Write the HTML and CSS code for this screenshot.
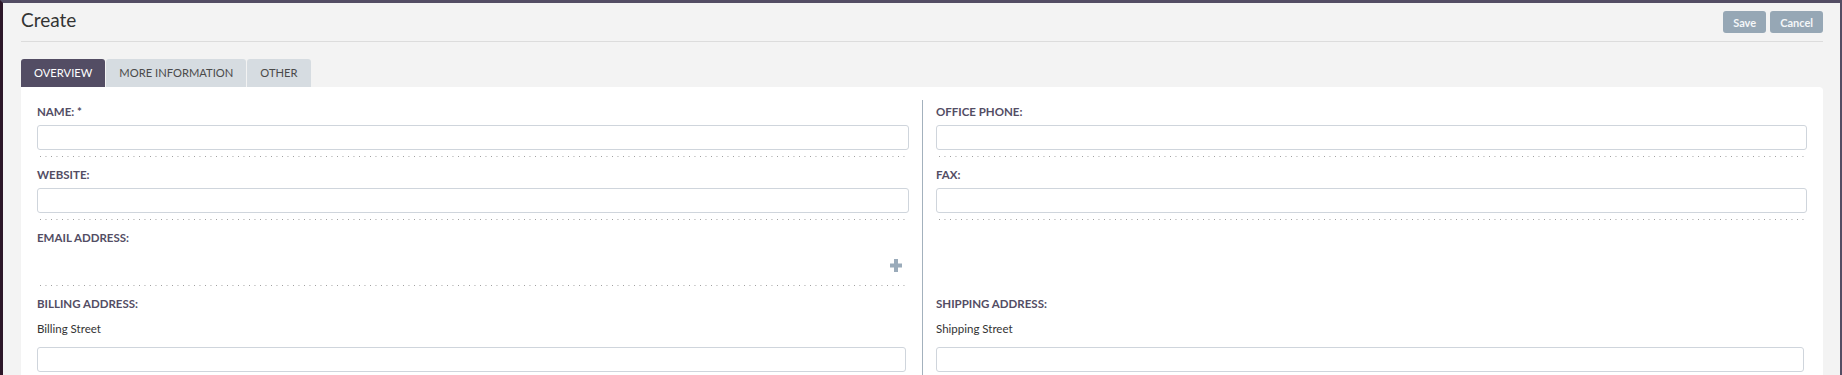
FILE: index.html
```html
<!DOCTYPE html>
<html lang="en">

<head>
    <meta charset="UTF-8">
    <meta name="viewport" content="width=device-width, initial-scale=1.0">
    <title>Create</title>
    <link rel="stylesheet" href="styles.css">
</head>

<body>
    <div class="page">
        <!-- Header -->
        <div class="header">
            <h1 class="title">Create</h1>
            <div class="actions">
                <button class="btn">Save</button>
                <button class="btn">Cancel</button>
            </div>
        </div>

        <!-- Tabs -->
        <div class="tabs">
            <div class="tab active">Overview</div>
            <div class="tab">More Information</div>
            <div class="tab">Other</div>
        </div>

        <div class="panel">
            <div class="fields">
                <div class="cell">
                    <div class="field first">
                        <label class="label">Name: *</label>
                        <input class="input" type="text">
                    </div>
                </div>
                <div class="cell right">
                    <div class="field first">
                        <label class="label">Office Phone:</label>
                        <input class="input" type="text">
                    </div>
                </div>

                <div class="cell">
                    <div class="field">
                        <label class="label">Website:</label>
                        <input class="input" type="text">
                    </div>
                </div>
                <div class="cell right">
                    <div class="field">
                        <label class="label">Fax:</label>
                        <input class="input" type="text">
                    </div>
                </div>

                <div class="cell">
                    <div class="field">
                        <label class="label">Email Address:</label>
                        <div class="add-line">
                            <svg class="plus" width="12" height="13" viewBox="0 0 12 13">
                                <rect x="4" y="0" width="4" height="13" fill="#9aabba" />
                                <rect x="0" y="4.5" width="12" height="4" fill="#9aabba" />
                            </svg>
                        </div>
                    </div>
                </div>
                <div class="cell right"></div>

                <div class="cell">
                    <div class="field address">
                        <label class="label">Billing Address:</label>
                        <div class="sublabel">Billing Street</div>
                        <input class="input" type="text">
                    </div>
                </div>
                <div class="cell right">
                    <div class="field address">
                        <label class="label">Shipping Address:</label>
                        <div class="sublabel">Shipping Street</div>
                        <input class="input" type="text">
                    </div>
                </div>
            </div>
        </div>
    </div>
</body>

</html>
```

FILE: styles.css
```css
html,
body {
    height: 100%;
}

body {
    margin: 0;
    box-sizing: border-box;
    font-family: Lato, "Open Sans", sans-serif;
    background-color: #f3f3f3;
    border-top: 3px solid #534d64;
    border-left: 3px solid #2c1729;
    border-right: 2px solid #534d64;
    overflow: hidden;
}

.page {
    display: flex;
    flex-direction: column;
    height: 100%;
    padding: 0 17px 0 18px;
}

.header {
    display: flex;
    justify-content: space-between;
    align-items: flex-start;
    padding: 8px 0;
    border-bottom: 1px solid #dcdcdc;
}

.title {
    margin: 0;
    font-size: 19px;
    line-height: 18px;
    font-weight: normal;
    color: #333;
}

.actions {
    display: flex;
    gap: 4px;
}

.btn {
    height: 22px;
    padding: 0 10px;
    border: none;
    border-radius: 3px;
    background-color: #96a7b5;
    color: #f4f6f8;
    font-family: Lato, sans-serif;
    font-size: 11px;
    font-weight: bold;
    cursor: pointer;
}

.tabs {
    display: flex;
    gap: 1px;
    margin-top: 17px;
}

.tab {
    height: 28px;
    line-height: 28px;
    padding: 0 13px;
    font-size: 11.2px;
    text-transform: uppercase;
    color: #4a4a4a;
    background-color: #d6dce1;
    border-radius: 3px 3px 0 0;
}

.tab.active {
    background-color: #534d64;
    color: #fff;
}

.panel {
    flex: 1;
    background-color: #fff;
    border-radius: 0 4px 0 0;
    padding: 13px 16px 0;
}

.fields {
    display: grid;
    grid-template-columns: 1fr 1fr;
}

.cell {
    padding-right: 13px;
}

.cell.right {
    padding-right: 0;
    padding-left: 13px;
    border-left: 1px solid #a3b1bd;
}

.field {
    padding: 10px 0 7px;
    background-image: linear-gradient(to right, #9d9d9d 1px, transparent 1px);
    background-size: 5.5px 1px;
    background-repeat: repeat-x;
    background-position: 3px bottom;
}

.field.first {
    padding-top: 4px;
}

.field.address {
    background-image: none;
}

.label {
    display: block;
    margin-bottom: 5px;
    font-size: 11.5px;
    line-height: 16px;
    font-weight: bold;
    text-transform: uppercase;
    color: #534d64;
}

.sublabel {
    margin: 9px 0 10px;
    font-size: 11.5px;
    line-height: 16px;
    color: #333;
}

.input {
    display: block;
    box-sizing: border-box;
    width: 100%;
    height: 25px;
    margin: 0;
    border: 1px solid #cfd5dc;
    border-radius: 3px;
    background: #fff;
}

.address .input {
    width: calc(100% - 3px);
}

.add-line {
    display: flex;
    justify-content: flex-end;
    align-items: center;
    height: 28px;
    padding-right: 7px;
}
```
